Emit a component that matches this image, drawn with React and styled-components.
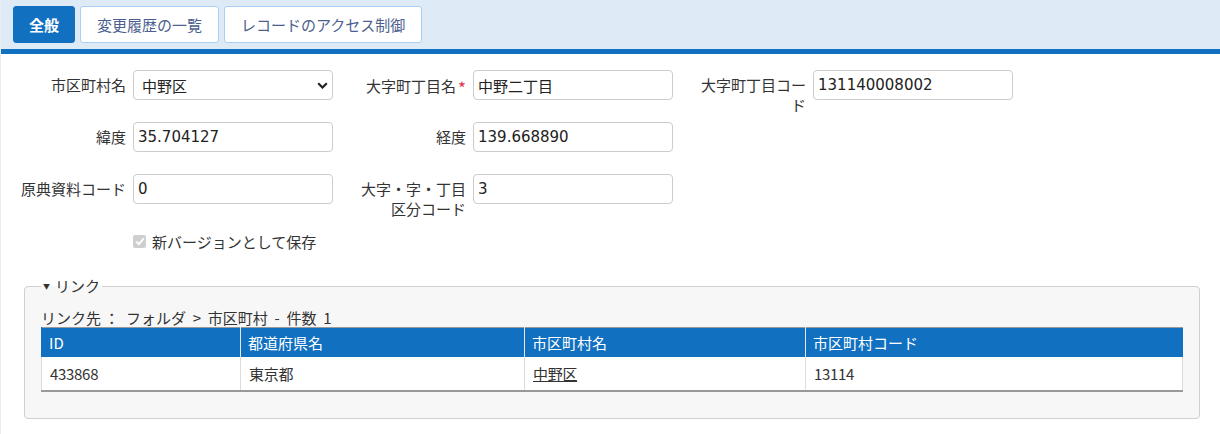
import React from 'react';
import styled, { createGlobalStyle } from 'styled-components';

const GlobalStyle = createGlobalStyle`
  html, body {
    margin: 0;
    padding: 0;
    background: #fff;
  }
  body {
    font-family: "Noto Sans CJK JP", "Noto Sans", sans-serif;
    font-size: 15px;
    color: #333;
  }
`;

const Page = styled.div`
  width: 1220px;
  min-height: 434px;
  border-left: 1px solid #ececec;
  box-sizing: border-box;
`;

const TabBar = styled.div`
  display: flex;
  align-items: center;
  gap: 5px;
  height: 49px;
  padding: 0 12px;
  background: #dfeaf7;
  border-bottom: 5px solid #1270c0;
`;

const TabButton = styled.button`
  height: 37px;
  padding: 0 ${({ active }) => (active ? '15px' : '16px')};
  border-radius: 3px;
  border: 1px solid ${({ active }) => (active ? '#1270c0' : '#a8d0f5')};
  background: ${({ active }) => (active ? '#1270c0' : '#fff')};
  color: ${({ active }) => (active ? '#fff' : '#4d5f8f')};
  font-family: inherit;
  font-size: 15px;
  font-weight: ${({ active }) => (active ? 700 : 400)};
  cursor: pointer;
`;

const Form = styled.div`
  padding: 16px 0 0 19px;
`;

const Row = styled.div`
  display: flex;
  height: 30px;
  margin-bottom: 22px;
`;

const Field = styled.div`
  display: flex;
  align-items: flex-start;
  width: 340px;
`;

const Label = styled.label`
  width: 106px;
  margin-right: 7px;
  padding-top: 5px;
  text-align: right;
  line-height: 20px;
  font-size: 15px;
  color: #333;
`;

const Required = styled.span`
  color: #e0304e;
  font-size: 17px;
  margin-left: 2px;
  position: relative;
  top: 3px;
`;

const TextInput = styled.input`
  width: 200px;
  height: 30px;
  box-sizing: border-box;
  padding: 0 4px;
  border: 1px solid #ccc;
  border-radius: 4px;
  font-family: "DejaVu Sans", "Noto Sans CJK JP", sans-serif;
  font-size: 15px;
  color: #222;
  background: #fff;
  outline: none;
`;

const SelectWrap = styled.div`
  position: relative;
  width: 200px;
  height: 30px;
`;

const Select = styled.select`
  appearance: none;
  width: 100%;
  height: 100%;
  box-sizing: border-box;
  padding: 0 24px 0 8px;
  border: 1px solid #ccc;
  border-radius: 4px;
  font-family: inherit;
  font-size: 15px;
  color: #222;
  background: #fff;
`;

const Chevron = styled.svg`
  position: absolute;
  right: 5px;
  top: 12px;
  pointer-events: none;
`;

const CheckRow = styled.div`
  display: flex;
  align-items: center;
  gap: 6px;
  height: 30px;
  margin-left: 113px;
`;

const CheckBox = styled.span`
  display: inline-flex;
  align-items: center;
  justify-content: center;
  width: 13px;
  height: 13px;
  border-radius: 2px;
  background: #cfcfcf;
`;

const CheckText = styled.span`
  font-size: 15px;
  color: #333;
`;

const LinkSet = styled.fieldset`
  margin: 21px 20px 0 23px;
  padding: 14px 16px 26px 16px;
  border: 1px solid #cfcfcf;
  border-radius: 4px;
  background: #f7f7f7;
`;

const Legend = styled.legend`
  padding: 0 2px;
  margin-left: 0;
  font-size: 15px;
  line-height: 18px;
  color: #333;
`;

const Caret = styled.span`
  display: inline-block;
  font-size: 7px;
  margin-right: 5px;
  vertical-align: 3px;
`;

const Caption = styled.div`
  font-size: 15px;
  line-height: 18px;
  color: #333;
  white-space: pre;
`;

const Table = styled.table`
  width: 100%;
  table-layout: fixed;
  border-collapse: collapse;
  background: #fff;
  border-top: 1px solid #999;
  border-bottom: 2px solid #999;
`;

const HeadCell = styled.th`
  box-sizing: border-box;
  height: 29px;
  padding: 0 7px;
  text-align: left;
  font-weight: 400;
  font-size: 15px;
  color: #fff;
  background: #1170bf;
  border-left: 1px solid ${({ first }) => (first ? '#1170bf' : '#e8e8e8')};
  width: ${({ w }) => (w ? `${w}px` : 'auto')};
`;

const Cell = styled.td`
  height: 33px;
  padding: 0 8px;
  font-size: 15px;
  color: #333;
  letter-spacing: -0.3px;
  border-left: 1px solid #ddd;
  border-right: ${({ last }) => (last ? '1px solid #ddd' : 'none')};
`;

const UnderLink = styled.a`
  color: #333;
  text-decoration: underline;
`;

const ChevronIcon = () => (
  <Chevron width="11" height="7" viewBox="0 0 11 7">
    <path d="M1.2 1.2 L5.5 5.5 L9.8 1.2" fill="none" stroke="#222" strokeWidth="2.2" />
  </Chevron>
);

const columns = [
  { key: 'id', title: 'ID', w: 199 },
  { key: 'pref', title: '都道府県名', w: 284 },
  { key: 'city', title: '市区町村名', w: 281 },
  { key: 'code', title: '市区町村コード' },
];

const rows = [{ id: '433868', pref: '東京都', city: '中野区', code: '13114' }];

export default function App() {
  return (
    <Page>
      <GlobalStyle />
      <TabBar>
        <TabButton active>全般</TabButton>
        <TabButton>変更履歴の一覧</TabButton>
        <TabButton>レコードのアクセス制御</TabButton>
      </TabBar>

      <Form>
        <Row>
          <Field>
            <Label>市区町村名</Label>
            <SelectWrap>
              <Select defaultValue="中野区">
                <option>中野区</option>
              </Select>
              <ChevronIcon />
            </SelectWrap>
          </Field>
          <Field>
            <Label>
              大字町丁目名<Required>*</Required>
            </Label>
            <TextInput defaultValue="中野二丁目" />
          </Field>
          <Field>
            <Label>大字町丁目コード</Label>
            <TextInput defaultValue="131140008002" />
          </Field>
        </Row>
        <Row>
          <Field>
            <Label>緯度</Label>
            <TextInput defaultValue="35.704127" />
          </Field>
          <Field>
            <Label>経度</Label>
            <TextInput defaultValue="139.668890" />
          </Field>
        </Row>
        <Row>
          <Field>
            <Label>原典資料コード</Label>
            <TextInput defaultValue="0" />
          </Field>
          <Field>
            <Label>大字・字・丁目区分コード</Label>
            <TextInput defaultValue="3" />
          </Field>
        </Row>
        <CheckRow>
          <CheckBox>
            <svg width="10" height="9" viewBox="0 0 10 9">
              <path d="M1.2 4.6 L3.9 7.2 L8.8 1.4" fill="none" stroke="#fff" strokeWidth="1.8" />
            </svg>
          </CheckBox>
          <CheckText>新バージョンとして保存</CheckText>
        </CheckRow>
      </Form>

      <LinkSet>
        <Legend>
          <Caret>▼</Caret>リンク
        </Legend>
        <Caption>{'リンク先 ：  フォルダ  >  市区町村  -  件数  1'}</Caption>
        <Table>
          <thead>
            <tr>
              {columns.map((c, i) => (
                <HeadCell key={c.key} w={c.w} first={i === 0}>
                  {c.title}
                </HeadCell>
              ))}
            </tr>
          </thead>
          <tbody>
            {rows.map((r) => (
              <tr key={r.id}>
                <Cell>{r.id}</Cell>
                <Cell>{r.pref}</Cell>
                <Cell>
                  <UnderLink href="#">{r.city}</UnderLink>
                </Cell>
                <Cell last>{r.code}</Cell>
              </tr>
            ))}
          </tbody>
        </Table>
      </LinkSet>
    </Page>
  );
}
